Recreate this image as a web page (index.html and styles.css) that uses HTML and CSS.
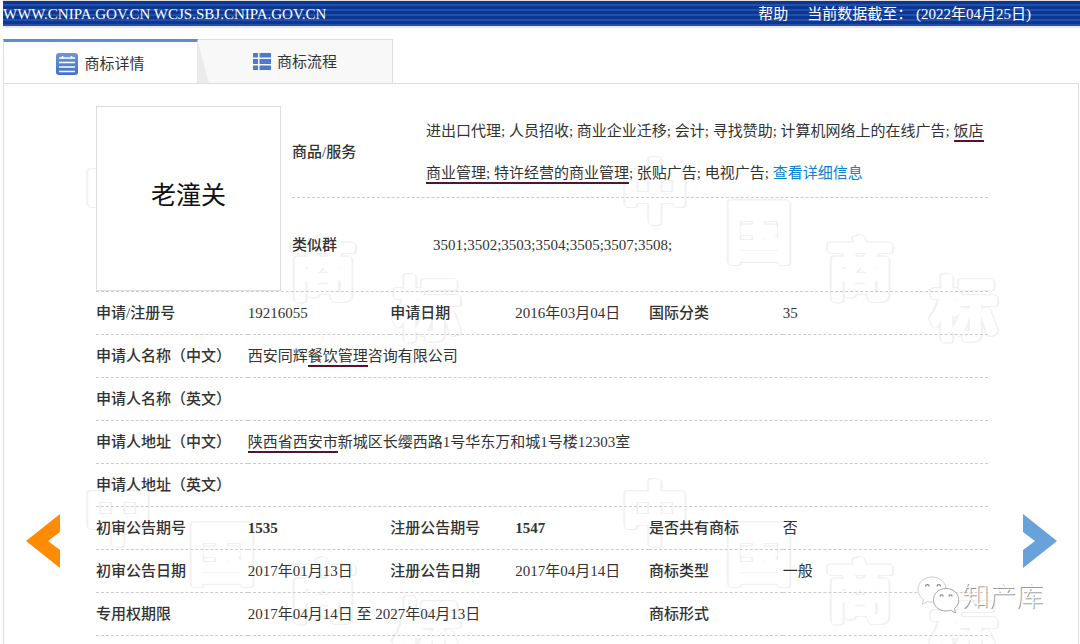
FILE: index.html
```html
<!DOCTYPE html>
<html lang="zh-CN">
<head>
<meta charset="utf-8">
<meta name="viewport" content="width=device-width, initial-scale=1">
<title>商标详情</title>
<link rel="stylesheet" href="styles.css">
</head>
<body>
<header class="topbar">
  <span class="topbar-site">WWW.CNIPA.GOV.CN WCJS.SBJ.CNIPA.GOV.CN</span>
  <a class="topbar-help" href="#help">帮助</a>
  <span class="topbar-date">当前数据截至： (2022年04月25日)</span>
</header>

<nav class="tabs">
  <button class="tab tab-active" type="button">
    <svg width="22" height="22" viewBox="0 0 22 22" aria-hidden="true">
      <defs><linearGradient id="blue" x1="0" y1="0" x2="0" y2="1"><stop offset="0" stop-color="#6d96d8"/><stop offset="1" stop-color="#4272c8"/></linearGradient></defs>
      <rect width="22" height="22" rx="3" fill="url(#blue)"/>
      <path d="M3 5h16M3 9.500h16M3 14h16M3 18.500h16M6.500 3v3M15.500 3v3" stroke="#fff" stroke-width="1.600" fill="none"/>
    </svg>
    <span>商标详情</span>
  </button>
  <button class="tab tab-idle" type="button">
    <svg width="18" height="17" viewBox="0 0 18 17" aria-hidden="true">
      <path d="M0 0h5v4.500H0zM6.500 0H18v4.500H6.500zM0 6h5v5H0zM6.500 6H18v5H6.500zM0 12.500h5V17H0zM6.500 12.500H18V17H6.500z" fill="#4b7bd0"/>
    </svg>
    <span>商标流程</span>
  </button>
</nav>

<main class="panel">
  <svg class="backdrop" aria-hidden="true">
    <defs>
      <pattern id="marks" x="78" y="70" width="537" height="322" patternUnits="userSpaceOnUse">
        <g class="backdrop-text">
          <text x="3" y="62">中</text>
          <text x="107" y="102">国</text>
          <text x="208" y="140">商</text>
          <text x="312" y="179">标</text>
        </g>
      </pattern>
    </defs>
    <rect width="100%" height="100%" fill="url(#marks)"/>
  </svg>

  <button class="arrow arrow-prev" type="button" aria-label="上一条">
    <svg width="34" height="54" viewBox="0 0 34 54"><path d="M34 0L0 27 34 54V36L22 27 34 18z" fill="#ff8c00"/></svg>
  </button>

  <div class="content">
    <section class="summary">
      <div class="specimen">老潼关</div>
      <dl class="facts">
        <div class="fact">
          <dt>商品/服务</dt>
          <dd>进出口代理; 人员招收; 商业企业迁移; 会计; 寻找赞助; 计算机网络上的在线广告; <span class="mark">饭店</span><span class="mark">商业管理; 特许经营的商业管理</span>; 张贴广告; 电视广告; <a href="#detail">查看详细信息</a></dd>
        </div>
        <div class="fact">
          <dt>类似群</dt>
          <dd class="codes">3501;3502;3503;3504;3505;3507;3508;</dd>
        </div>
      </dl>
    </section>

    <table class="details">
      <colgroup><col class="c1"><col class="c2"><col class="c3"><col class="c4"><col class="c5"><col class="c6"></colgroup>
      <tbody>
        <tr><th scope="row">申请/注册号</th><td>19216055</td><th>申请日期</th><td>2016年03月04日</td><th>国际分类</th><td>35</td></tr>
        <tr><th scope="row">申请人名称（中文）</th><td colspan="5">西安同辉<span class="mark">餐饮管理</span>咨询有限公司</td></tr>
        <tr><th scope="row">申请人名称（英文）</th><td colspan="5"></td></tr>
        <tr><th scope="row">申请人地址（中文）</th><td colspan="5"><span class="mark">陕西省西安市</span>新城区长缨西路1号华东万和城1号楼12303室</td></tr>
        <tr><th scope="row">申请人地址（英文）</th><td colspan="5"></td></tr>
        <tr><th scope="row">初审公告期号</th><td><b>1535</b></td><th>注册公告期号</th><td><b>1547</b></td><th>是否共有商标</th><td>否</td></tr>
        <tr><th scope="row">初审公告日期</th><td>2017年01月13日</td><th>注册公告日期</th><td>2017年04月14日</td><th>商标类型</th><td>一般</td></tr>
        <tr><th scope="row">专用权期限</th><td colspan="3">2017年04月14日 至 2027年04月13日</td><th>商标形式</th><td></td></tr>
      </tbody>
    </table>
  </div>

  <button class="arrow arrow-next" type="button" aria-label="下一条">
    <svg width="34" height="54" viewBox="0 0 34 54"><path d="M0 0L34 27 0 54V36L12 27 0 18z" fill="#67a2da"/></svg>
  </button>
</main>

<div class="stamp">
  <svg width="42" height="38" viewBox="0 0 42 38" aria-hidden="true">
    <g fill="#fff" stroke="#a5a5a5" stroke-width="1">
      <path d="M15 1C7 1 1 6.500 1 13.500c0 4 2 7.500 5.500 10L5 28.500l5.500-3c1.500.500 3 .700 4.500.700 8 0 14-5.500 14-12.500S23 1 15 1z" stroke="#d0d0d0"/>
      <path d="M29 12.500c-7.300 0-12.500 5-12.500 11.300S21.700 35 29 35c1.700 0 3.200-.300 4.700-.800l5 2.800-1.300-4.500c2.700-2 4.300-5 4.300-8.500 0-6.500-5.400-11.500-12.700-11.500z"/>
    </g>
    <g fill="none" stroke="#888" stroke-width="1.200">
      <path d="M8.500 10.500a1.800 1.800 0 0 1 3.600 0M20 10.500a1.800 1.800 0 0 1 3.600 0M23 20.500a1.600 1.600 0 0 1 3.200 0M32 20.500a1.600 1.600 0 0 1 3.200 0"/>
    </g>
  </svg>
  <span>知产库</span>
</div>
</body>
</html>
```

FILE: styles.css
```css
* {
  box-sizing: border-box;
}

body {
  margin: 0;
  padding: 1px 0 0 3px;
  min-height: 100vh;
  display: flex;
  flex-direction: column;
  position: relative;
  background: #fff;
  color: #333;
  font: 15px/20px "Liberation Serif", "Noto Sans CJK SC", serif;
}

button {
  margin: 0;
  padding: 0;
  border: 0;
  background: none;
  color: inherit;
  font: inherit;
  cursor: pointer;
}

a {
  color: #0a84d0;
  text-decoration: none;
}

.topbar {
  display: flex;
  align-items: center;
  height: 25px;
  padding-right: 49px;
  background: repeating-linear-gradient(#0a3796 0 3px, #2650a6 3px 5px);
  box-shadow: 0 -1px #ddd, 0 2px #e6e9f4;
  color: #fff;
  white-space: nowrap;
}

.topbar-site {
  flex: 1;
}

.topbar-help {
  margin-right: 19px;
  color: #fff;
}

.tabs {
  display: flex;
  margin-top: 13px;
}

.tab {
  display: flex;
  align-items: center;
  justify-content: center;
  gap: 6px;
  width: 195px;
  height: 44px;
  border: 1px solid #ddd;
  border-bottom: 0;
}

.tab-active {
  border-top: 3px solid #5f8bd2;
  border-right-color: #e8e8e8;
  padding-top: 3px;
}

.tab-idle {
  border-left: 0;
  background: linear-gradient(75deg, #ebebeb 10px, #f8f8f8 11px);
}

.panel {
  position: relative;
  flex: 1;
  display: grid;
  grid-template-columns: 92px minmax(0, 1fr) 90px;
  align-items: start;
  margin-right: 1px;
  border: 1px solid #ddd;
  border-bottom: 0;
}

.backdrop {
  position: absolute;
  inset: 0;
  width: 100%;
  height: 100%;
}

.backdrop-text {
  font: 66px "Noto Sans CJK SC", sans-serif;
  fill: #fff;
  stroke: #fff;
  stroke-width: 6px;
  stroke-linejoin: round;
  filter: drop-shadow(1px 1px #f1f1f1) drop-shadow(-1px -1px #f1f1f1) drop-shadow(1px 0 #f1f1f1) drop-shadow(-1px 0 #f1f1f1);
}

.arrow {
  position: relative;
  height: 54px;
  margin-top: 430px;
}

.arrow-prev {
  justify-self: start;
  margin-left: 22px;
}

.arrow-next {
  justify-self: end;
  margin-right: 21px;
}

.content {
  position: relative;
  padding-top: 22px;
}

.summary {
  display: grid;
  grid-template-columns: 185px minmax(0, 1fr);
  column-gap: 11px;
  border-bottom: 1px dashed #ccc;
}

.specimen {
  display: grid;
  place-items: center;
  height: 185px;
  padding-bottom: 12px;
  border: 1px solid #ddd;
  background: #fff;
  color: #111;
  font: 25px/36px "Noto Sans CJK SC", sans-serif;
}

.facts {
  display: grid;
  grid-template-rows: 92px 1fr;
  margin: 0;
}

.fact {
  display: grid;
  grid-template-columns: 134px minmax(0, 1fr);
  align-items: center;
}

.fact:first-child {
  border-bottom: 1px dashed #ccc;
}

dt,
th {
  font-weight: 500;
  text-align: left;
}

dd {
  margin: 0;
  line-height: 42px;
}

.codes {
  padding-left: 7px;
}

.mark {
  position: relative;
}

.mark::after {
  content: "";
  position: absolute;
  left: 0;
  right: 0;
  bottom: -3px;
  height: 2px;
  background: #5a0f35;
}

.details {
  width: 100%;
  border-collapse: separate;
  border-spacing: 0;
  table-layout: fixed;
}

.details th,
.details td {
  height: 43px;
  padding: 0;
  border-bottom: 1px dashed #ccc;
  white-space: nowrap;
}

.c1 { width: 17%; }
.c2 { width: 16%; }
.c3 { width: 14%; }
.c4 { width: 15%; }
.c5 { width: 15%; }
.c6 { width: 23%; }

.stamp {
  position: absolute;
  right: 37px;
  bottom: 30px;
  display: flex;
  align-items: center;
  gap: 3px;
  color: #fff;
  font: 300 27px/36px "Noto Sans CJK SC", sans-serif;
  text-shadow: 1px 1px 0 #999;
}
```
